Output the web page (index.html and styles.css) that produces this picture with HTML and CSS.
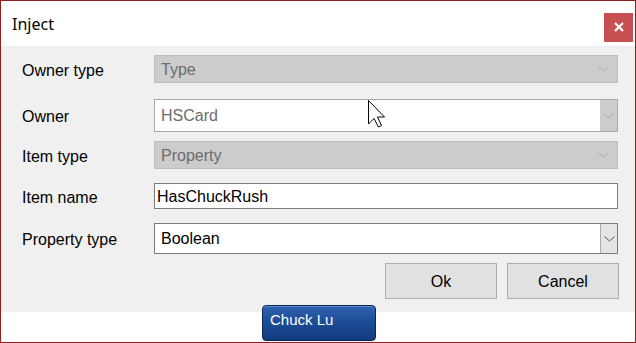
FILE: index.html
```html
<!DOCTYPE html>
<html lang="en">
<head>
  <meta charset="UTF-8">
  <meta name="viewport" content="width=device-width, initial-scale=1.0">
  <title>Inject</title>
  <link rel="stylesheet" href="styles.css">
</head>
<body>
  <div class="window">
    <div class="titlebar">
      <span class="title">Inject</span>
      <button class="close-btn" type="button" aria-label="Close">
        <svg width="10" height="10" viewBox="0 0 10 10"><path d="M1 1 L9 9 M9 1 L1 9" stroke="#fff" stroke-width="2.2"/></svg>
      </button>
    </div>

    <form class="dialog-body">
      <div class="row row-owner-type">
        <label class="label">Owner type</label>
        <div class="combo combo-disabled">
          <span class="combo-text">Type</span>
          <span class="combo-arrow">
            <svg width="11" height="6" viewBox="0 0 11 6"><polyline points="0.5,0.5 5.5,5 10.5,0.5" fill="none" stroke="#a9a9a9" stroke-width="1"/></svg>
          </span>
        </div>
      </div>

      <div class="row row-owner">
        <label class="label">Owner</label>
        <div class="combo combo-owner">
          <span class="combo-text">HSCard</span>
          <span class="combo-arrow combo-arrow-boxed">
            <svg width="11" height="6" viewBox="0 0 11 6"><polyline points="0.5,0.5 5.5,5 10.5,0.5" fill="none" stroke="#a9a9a9" stroke-width="1"/></svg>
          </span>
        </div>
      </div>

      <div class="row row-item-type">
        <label class="label">Item type</label>
        <div class="combo combo-disabled">
          <span class="combo-text">Property</span>
          <span class="combo-arrow">
            <svg width="11" height="6" viewBox="0 0 11 6"><polyline points="0.5,0.5 5.5,5 10.5,0.5" fill="none" stroke="#a9a9a9" stroke-width="1"/></svg>
          </span>
        </div>
      </div>

      <div class="row row-item-name">
        <label class="label" for="item-name">Item name</label>
        <input class="textbox" type="text" id="item-name" value="HasChuckRush">
      </div>

      <div class="row row-property-type">
        <label class="label">Property type</label>
        <div class="combo combo-active">
          <span class="combo-text">Boolean</span>
          <span class="combo-arrow combo-arrow-boxed">
            <svg width="11" height="6" viewBox="0 0 11 6"><polyline points="0.5,0.5 5.5,5 10.5,0.5" fill="none" stroke="#555" stroke-width="1"/></svg>
          </span>
        </div>
      </div>

      <div class="actions">
        <button class="btn" type="button">Ok</button>
        <button class="btn" type="button">Cancel</button>
      </div>
    </form>

    <div class="footer"></div>

    <!-- taskbar button and mouse pointer sit over the dialog -->
    <div class="taskbar-btn">Chuck Lu</div>
    <svg class="pointer" width="18" height="28" viewBox="0 0 18 28">
      <path d="M0.5 0.5 L0.5 24 L6 18.5 L10.5 27 L13.5 25.5 L9.5 17 L16.5 17 Z" fill="#fff" stroke="#000" stroke-width="1"/>
    </svg>
  </div>
</body>
</html>
```

FILE: styles.css
```css
/* Reset */
* {
  box-sizing: border-box;
  margin: 0;
  padding: 0;
}

body {
  width: 636px;
  height: 343px;
  overflow: hidden;
  background-color: #ffffff;
  font-family: "Liberation Sans", Arial, sans-serif;
  font-size: 16px;
  color: #000;
}

/* Window frame */
.window {
  position: relative;
  width: 636px;
  height: 343px;
  border: 1px solid #8e1f1f;
  background-color: #ffffff;
  display: flex;
  flex-direction: column;
}

/* Title bar */
.titlebar {
  height: 45px;
  display: flex;
  align-items: center;
  justify-content: space-between;
  padding: 0 2px 0 11px;
  background-color: #ffffff;
}

.title {
  font-family: "Noto Sans", "Open Sans", sans-serif;
  font-size: 16px;
  color: #000;
  margin-top: 1px;
}

.close-btn {
  width: 29px;
  height: 29px;
  margin-top: 7px;
  border: none;
  background-color: #c75050;
  display: flex;
  align-items: center;
  justify-content: center;
}

/* Form body */
.dialog-body {
  height: 266px;
  background-color: #f0f0f0;
  padding: 9px 17px 0 21px;
  display: flex;
  flex-direction: column;
}

.row {
  display: flex;
  align-items: center;
}

.label {
  width: 132px;
  flex-shrink: 0;
  padding-top: 3px;
  color: #000;
}

.row-owner-type { height: 28px; margin-bottom: 16px; }
.row-owner { height: 33px; margin-bottom: 9px; }
.row-item-type { height: 28px; margin-bottom: 14px; }
.row-item-name { height: 26px; margin-bottom: 14px; }
.row-property-type { height: 31px; margin-bottom: 9px; }

/* Combo boxes */
.combo {
  flex: 1;
  height: 100%;
  display: flex;
  align-items: stretch;
  border: 1px solid #bdbdbd;
}

.combo-text {
  flex: 1;
  display: flex;
  align-items: center;
  padding: 1px 0 0 6px;
}

.combo-arrow {
  width: 17px;
  display: flex;
  align-items: center;
  justify-content: center;
}

.combo-disabled {
  background-color: #cccccc;
  color: #6d6d6d;
}

.combo-disabled .combo-arrow {
  width: 27px;
}

.combo-owner {
  background-color: #ffffff;
  border-color: #a8a8a8;
  color: #6d6d6d;
}

.combo-owner .combo-arrow-boxed {
  background-color: #cccccc;
}

.combo-active {
  background-color: #ffffff;
  border-color: #7a7a7a;
  color: #000;
}

.combo-active .combo-arrow-boxed {
  background-color: #e5e5e5;
  border-left: 1px solid #acacac;
}

/* Text input */
.textbox {
  flex: 1;
  height: 100%;
  border: 1px solid #7a7a7a;
  padding: 1px 0 0 2px;
  font-family: "Liberation Sans", Arial, sans-serif;
  font-size: 16px;
  color: #000;
  background-color: #ffffff;
}

/* Ok / Cancel */
.actions {
  display: flex;
  justify-content: flex-end;
  gap: 10px;
  margin-right: -1px;
}

.btn {
  width: 112px;
  height: 36px;
  padding-top: 1px;
  background-color: #e1e1e1;
  border: 1px solid #adadad;
  font-family: "Liberation Sans", Arial, sans-serif;
  font-size: 16px;
  color: #000;
}

.footer {
  flex: 1;
  background-color: #ffffff;
}

/* Overlays */
.taskbar-btn {
  position: absolute;
  left: 261px;
  top: 304px;
  width: 114px;
  height: 36px;
  padding: 5px 0 0 7px;
  border: 1px solid #0a2656;
  border-radius: 4px;
  background: linear-gradient(to bottom, #2f62b0 0%, #1c4d98 45%, #123c7c 100%);
  box-shadow: inset 0 1px 0 rgba(255, 255, 255, 0.25);
  color: #ffffff;
  font-size: 15px;
}

.pointer {
  position: absolute;
  left: 367px;
  top: 99px;
}
```
